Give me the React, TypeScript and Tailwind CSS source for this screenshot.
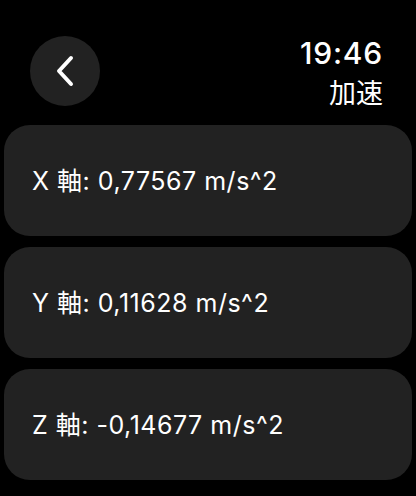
import React from "react";

const font = { fontFamily: 'Inter, "Noto Sans CJK JP", sans-serif' };

function Card({ label }: { label: string }) {
  return (
    <div className="h-[111px] rounded-[26px] bg-[#222222] flex items-center pl-[28px]">
      <span className="text-white text-[25px] tracking-[0.5px] leading-none mt-[2px]">{label}</span>
    </div>
  );
}

export default function App() {
  return (
    <div className="w-[416px] h-[496px] bg-black overflow-hidden" style={font}>
      <div className="flex justify-between pt-[36px] pl-[30px] pr-[33px]">
        <div className="w-[70px] h-[70px] rounded-full bg-[#222222] flex items-center justify-center">
          <svg width="24" height="34" viewBox="0 0 24 34">
            <polyline points="18,4 6,17 18,30" fill="none" stroke="white" strokeWidth="4" strokeLinecap="round" strokeLinejoin="round" />
          </svg>
        </div>
        <div className="flex flex-col items-end text-white">
          <span className="text-[30px] font-medium tracking-[0.8px] leading-none mt-[2px]">19:46</span>
          <span className="text-[27px] leading-none mt-[12px]">加速</span>
        </div>
      </div>
      <div className="flex flex-col gap-[11px] px-[4px] mt-[18px]">
        <Card label="X 軸: 0,77567 m/s^2" />
        <Card label="Y 軸: 0,11628 m/s^2" />
        <Card label="Z 軸: -0,14677 m/s^2" />
      </div>
    </div>
  );
}
